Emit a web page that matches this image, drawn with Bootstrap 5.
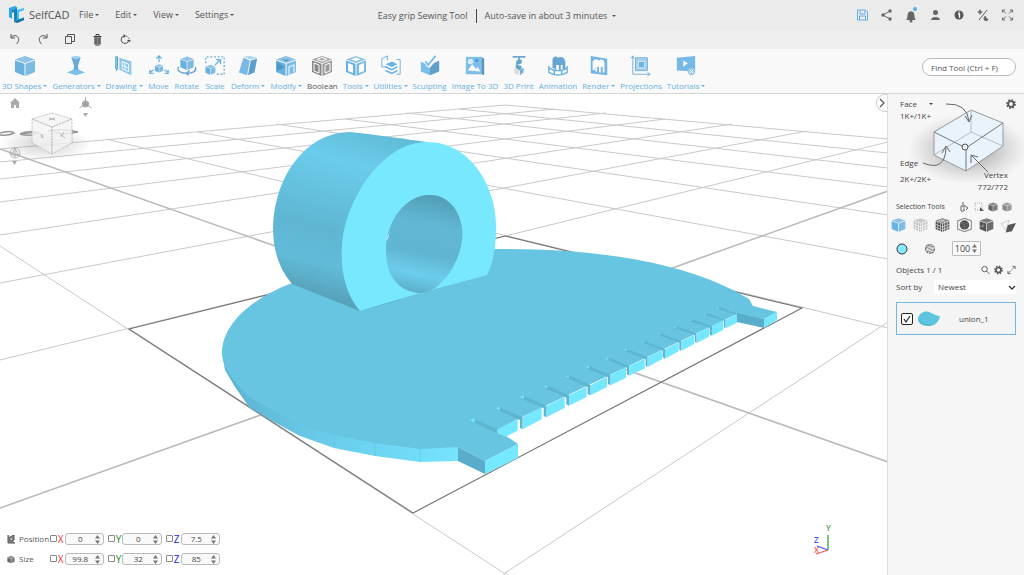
<!DOCTYPE html>
<html lang="en">
<head>
<meta charset="utf-8">
<meta name="viewport" content="width=device-width, initial-scale=1">
<title>SelfCAD - Easy grip Sewing Tool</title>
<link rel="stylesheet" href="https://cdn.jsdelivr.net/npm/bootstrap@5.3.0/dist/css/bootstrap.min.css">
<style>
body{font-family:"Open Sans","Noto Sans",sans-serif;font-size:9px;line-height:12px;color:#555;background:#fff;overflow:hidden}
button{font:inherit;color:inherit;background:none;border:0;padding:0;line-height:12px;white-space:nowrap}
svg{display:block;flex:none}
.caret::after{content:"";display:inline-block;border:2px solid transparent;border-top-color:currentColor;border-bottom:0;vertical-align:2px;margin-left:2px}
.menubar{height:30px;background:#ebebeb;padding:0 7px 0 8px}
.brand{width:63px;font-size:11px;color:#555;text-decoration:none;white-space:nowrap}
.menus{gap:16px}
.doc-title{padding-right:94px;padding-top:2px}
.doc-sep{width:1px;height:14px;background:#444}
.actions{gap:5px}
.quickbar{height:19px;background:#efefef;gap:14px}
.ribbon{height:45px;background:#f9f9f9;border-bottom:1px solid #d4d4d4;color:#68b0de;font-size:8px}
.tools{gap:5px;padding:4px 0 0 2px}
.tool{display:flex;flex-direction:column;align-items:center;gap:3px}
.tool.active{color:#555}
.find{width:94px;height:18px;font-size:8px;border:1px solid #bbb;border-radius:9px;background:#fff;color:#555;padding:0 8px}
.find::placeholder{color:#555;opacity:1}
.scene{inset:0;width:100%;height:100%}
.collapse-btn{right:0;top:0;width:11px;height:18px;border:1px solid #ccc;border-right:0;border-radius:10px 0 0 10px;background:#fff}
.coords{left:7px;bottom:10px;gap:8px}
.coords label{font-size:10px}
.coords .coord-name label{font-size:8px}
.coord-name{width:43px;gap:4px;white-space:nowrap}
.axis{width:58px;gap:1px}
.tick{appearance:none;width:7px;height:7px;border:1px solid #888;border-radius:1px;margin:0 0 2px;background:#fff}
.spin{width:41px;height:12px;border:1px solid #bbb;border-radius:3px;background:#f9f9f9;padding:0 3px 0 0}
.spin input{width:100%;min-width:0;border:0;background:none;padding:0;text-align:center;font-size:8px;line-height:10px;color:#444}
.side{width:137px;background:#f6f6f6;border-left:1px solid #ddd;color:#444;font-size:8px}
.picker{height:103px}
.picker .diagram{left:0;top:0;width:136px}
.select-types{font-size:7px}
.mini-icons{gap:4px;padding-right:12px}
.shape-row{gap:7px;margin-left:-5px}
.opacity-box{width:29px;height:15px;border-radius:1px}
.opacity-box input{font-size:9px}
.sort-select{appearance:none;width:82px;height:14px;border:0;background:#fff;font-size:8px;color:#444;padding:0 4px}
.object-item{height:33px;border:1px solid #74b7e3;background:#f4f4f4}
.object-tick{appearance:none;width:12px;height:12px;margin:0;border:1px solid #222;border-radius:2px;background:#fff url("data:image/svg+xml,%3Csvg xmlns='http://www.w3.org/2000/svg' viewBox='0 0 10 10'%3E%3Cpath d='M2 5l2 3 4-6' fill='none' stroke='%23222' stroke-width='1.2'/%3E%3C/svg%3E")}
</style>
<script src="https://cdn.jsdelivr.net/npm/bootstrap@5.3.0/dist/js/bootstrap.bundle.min.js"></script>
</head>
<body class="vh-100 d-flex flex-column">
<svg width="0" height="0" class="position-absolute">
<defs>
<symbol id="cube" viewBox="0 0 22 22"><path d="M11 1L21 4.500 11 8 1 4.500z" fill="currentColor" opacity=".75"/><path d="M1 5.500l9.500 3.300V21L1 17z" fill="currentColor"/><path d="M21 5.500l-9.500 3.300V21L21 17z" fill="currentColor" opacity=".85"/></symbol>
<symbol id="spinner" viewBox="0 0 5 9"><path d="M0 3.500L2.500 0 5 3.500zM0 5.500L2.500 9 5 5.500z" fill="#777"/></symbol>
<symbol id="gear" viewBox="0 0 10 10"><circle cx="5" cy="5" r="2.800" fill="none" stroke="#555" stroke-width="1.800"/><circle cx="5" cy="5" r="4" fill="none" stroke="#555" stroke-width="1.800" stroke-dasharray="1.600 1.540"/></symbol>
<symbol id="expand" viewBox="0 0 10 10"><path d="M6 1h3v3M9 1L5.500 4.500M4 9H1V6M1 9l3.500-3.500" fill="none" stroke="#666"/></symbol>
</defs>
</svg>

<header>
<nav class="menubar d-flex align-items-center" aria-label="Main">
<a href="#" class="brand d-flex align-items-center gap-1 me-2">
<svg width="17" height="18" viewBox="0 0 17 18"><path d="M1 2l6-2 3 2-6 2v9l-3-2z" fill="#2aa7e0"/><path d="M4 4l5-2v12l-3 2V6l-2 1z" fill="#1683c4"/><path d="M9 4l7-2v2l-5 2v7l5-2v3l-7 3z" fill="#43c1ee"/><path d="M6 16l3-2 7-2v2l-7 3z" fill="#176d9d"/></svg><span>SelfCAD</span></a>
<div class="menus d-flex">
<button class="caret">File</button><button class="caret">Edit</button><button class="caret">View</button><button class="caret">Settings</button>
</div>
<div class="doc-title d-flex align-items-center mx-auto gap-2"><span>Easy grip Sewing Tool</span><span class="doc-sep"></span><button class="caret">Auto-save in about 3 minutes&nbsp;</button></div>
<div class="actions d-flex align-items-center">
<button aria-label="Save" class="px-1"><svg width="11" height="12" viewBox="0 0 11 12"><path d="M.5 1h8l2 2v8H.5zM3 1v4h5V1M2.500 11V7h6v4" fill="none" stroke="#66aee0"/></svg></button>
<button aria-label="Share" class="px-1"><svg width="11" height="12" viewBox="0 0 11 12"><path d="M9 2L2 6l7 4" fill="none" stroke="#666"/><g fill="#666"><circle cx="9" cy="2" r="1.700"/><circle cx="2" cy="6" r="1.700"/><circle cx="9" cy="10" r="1.700"/></g></svg></button>
<button aria-label="Notifications" class="px-1"><svg width="12" height="18" viewBox="0 0 12 18"><path d="M1 14c2-1 1-7 3-8 1-1 3-1 4 0 2 1 1 7 3 8z" fill="#666"/><circle cx="6" cy="15" r="1.500" fill="#666"/><circle cx="10" cy="3" r="2" fill="#5aaee9"/></svg></button>
<button aria-label="Account" class="px-1"><svg width="11" height="12" viewBox="0 0 11 12" fill="#666"><circle cx="5.500" cy="3.500" r="2.500"/><path d="M1 11c0-4 9-4 9 0z"/></svg></button>
<button aria-label="Info" class="px-1"><svg width="10" height="12" viewBox="0 0 10 12"><circle cx="5" cy="6" r="4.500" fill="#555"/><path d="M4 5h1.500v4M5 2.500v1.300" stroke="#fff" stroke-width="1.300" fill="none"/></svg></button>
<button aria-label="Theme" class="px-1"><svg width="12" height="12" viewBox="0 0 12 12"><path d="M10 1L2 11" stroke="#666"/><circle cx="3" cy="3" r="1.700" fill="#666"/><path d="M3 0v6M0 3h6" stroke="#666" stroke-width=".5"/><path d="M9 7a2.500 2.500 0 1 0 2.500 3A2.500 2.500 0 0 1 9 7z" fill="#666"/></svg></button>
<button aria-label="Full screen" class="px-1"><svg width="11" height="12" viewBox="0 0 11 12"><path d="M.5 3.500V1H3M8 1h2.500v2.500M.5 8.500V11H3M8 11h2.500V8.500M1 1.500l3 3M10 1.500l-3 3M1 10.500l3-3M10 10.500l-3-3" fill="none" stroke="#666"/></svg></button>
</div>
</nav>
<div class="quickbar d-flex align-items-start px-2">
<button aria-label="Undo" class="pt-1"><svg width="14" height="12" viewBox="0 0 14 12"><path d="M3 0v4h4M3 3.500c5-5 11 1 5.500 6.500" fill="none" stroke="#555"/></svg></button>
<button aria-label="Redo" class="pt-1"><svg width="14" height="12" viewBox="0 0 14 12"><path d="M11 0v4H7M11 3.500C6-1.500 0 4.500 5.500 10" fill="none" stroke="#555"/></svg></button>
<button aria-label="Copy" class="pt-1"><svg width="13" height="12" viewBox="0 0 13 12"><path d="M1.500 2.500h6v7h-6zM3.500 2V.5h7v7H8" fill="none" stroke="#555"/></svg></button>
<button aria-label="Delete" class="pt-1"><svg width="13" height="13" viewBox="0 0 13 13"><path d="M3 3h7v7l-2 2H5l-2-2z" fill="#888"/><path d="M2.500 2.500h8M5 2V.5h3V2M5 4v6M8 4v6" fill="none" stroke="#444"/></svg></button>
<button aria-label="Reset" class="pt-1"><svg width="14" height="12" viewBox="0 0 14 12"><path d="M10 8a4 4 0 0 1-7-2 4 4 0 0 1 4-4" fill="none" stroke="#555"/><path d="M8 2a4 4 0 0 1 3 5" fill="none" stroke="#555" stroke-dasharray="1.500"/><path d="M5.500 0v4L8 2zM9 6h4l-2 2.500z" fill="#555"/></svg></button>
</div>
<div class="ribbon d-flex align-items-center justify-content-between">
<div class="tools d-flex">
<button class="tool"><svg width="22" height="22"><use href="#cube"/></svg><span class="caret">3D Shapes</span></button>
<button class="tool"><svg width="22" height="22" viewBox="0 0 22 24"><ellipse cx="11" cy="3" rx="5" ry="2" fill="#9cd0ef"/><path d="M6 3q5 3 10 0l-3 9 1 5H8l1-5z" fill="#67aad8"/><path d="M1 19l7-3h6l7 3-10 3z" fill="#7fc0e8"/></svg><span class="caret">Generators</span></button>
<button class="tool"><svg width="22" height="22" viewBox="0 0 22 24"><path d="M6 3l13 4v15L6 16z" fill="#8cc6ea"/><path d="M9 7l7 3v8l-7-3zM9 11l6 3M12 8v8" fill="none" stroke="#fff"/><path d="M4 2v12l-1 3-1-3V2z" fill="#9dcdeb" stroke="#4797ca"/></svg><span class="caret">Drawing</span></button>
<button class="tool"><svg width="22" height="22" viewBox="0 0 22 24"><svg x="6" y="9" width="10" height="11"><use href="#cube"/></svg><path d="M11 8V2M8 4l3-3 3 3M5 16l-4 3M1 16v4h4M17 16l4 3M21 16v4h-4" fill="none" stroke="currentColor" stroke-width="1.300"/></svg><span>Move</span></button>
<button class="tool"><svg width="22" height="22" viewBox="0 0 22 24"><svg x="3" y="0" width="16" height="18"><use href="#cube"/></svg><path d="M2 13c-3 4 2 7 9 7s11-3 9-7M14 17l-4 3 3 2" fill="none" stroke="#559fd0" stroke-width="1.300"/></svg><span>Rotate</span></button>
<button class="tool"><svg width="22" height="22" viewBox="0 0 22 24"><svg x="0" y="9" width="12" height="14"><use href="#cube"/></svg><path d="M1 9V2h20v19h-8" fill="none" stroke="currentColor" stroke-width="1.500" stroke-dasharray="2"/><path d="M11 11l5-5M12 5h5v5" fill="none" stroke="currentColor" stroke-width="1.500"/></svg><span>Scale</span></button>
<button class="tool"><svg width="22" height="22" viewBox="0 0 22 24"><path d="M6 2l7-1 8 2-7 2z" fill="#a9d5f0"/><path d="M6 3l7 3-3 16-9-3z" fill="#78bae5"/><path d="M21 4l-7 2-3 16 7-3z" fill="#5e9fca"/></svg><span class="caret">Deform</span></button>
<button class="tool"><svg width="22" height="22" viewBox="0 0 22 22"><use href="#cube"/><path d="M2 7l8 5-8 4z" fill="#4f97c7"/><path d="M14 20v-8l5-2v7" fill="none" stroke="#e3f2fb" stroke-width="1.200"/><path d="M7 4.500h8l-4 2z" fill="#4f97c7"/></svg><span class="caret">Modify</span></button>
<button class="tool active"><svg width="22" height="22" viewBox="0 0 22 22" color="#888"><use href="#cube"/><path d="M3 8l5 2v8l-5-2zM14 10l5-2v8l-5 2zM6 4.500l5-2 5 2-5 1.500z" fill="none" stroke="#fff"/></svg><span>Boolean</span></button>
<button class="tool"><svg width="22" height="22" viewBox="0 0 22 22"><use href="#cube"/><path d="M3 8l5 2v8l-5-2zM14 10l5-2v8l-5 2zM6 4.500l5-2 5 2-5 1.500z" fill="#fff"/></svg><span class="caret">Tools</span></button>
<button class="tool"><svg width="22" height="22" viewBox="0 0 22 24"><path d="M7 13H1V4l6-3v5M17 5h4v16h-4" fill="none" stroke="currentColor"/><path d="M5 10l7-3 6 3-6 3z" fill="#6ab3df"/><path d="M5 12l7 3 6-3v2l-6 3-7-3zM5 16l7 3 6-3v2l-6 3-7-3z" fill="#6ab3df"/></svg><span class="caret">Utilities</span></button>
<button class="tool"><svg width="22" height="22" viewBox="0 0 22 24"><path d="M1 7l6 3 4 4v8L1 18z" fill="#7dbee8"/><path d="M21 6l-6 3-4 5v8l10-4z" fill="#609fca"/><path d="M6 7l3 4 8-10" fill="none" stroke="#f9f9f9" stroke-width="4"/><path d="M6 7l3 4 8-10" fill="none" stroke="#7dbee8" stroke-width="2"/></svg><span>Sculpting</span></button>
<button class="tool"><svg width="22" height="22" viewBox="0 0 22 24"><path d="M1 2h17v19H1z" fill="#7dbee8"/><path d="M18 2l3 2v18l-3-1z" fill="#5797c4"/><path d="M3 17l5-7 4 5 2-2 3 5" fill="#f9f9f9"/><circle cx="6" cy="7" r="3" fill="#d6ecf9"/><circle cx="13" cy="6" r="2" fill="#539ecf"/></svg><span>Image To 3D</span></button>
<button class="tool"><svg width="22" height="22" viewBox="0 0 22 24"><path d="M4 2h14M11 2v5" stroke="#6eaad0" stroke-width="2"/><path d="M8 6l6-1v4l-5 2 5 1-1 4-3 1-3-4 1-2z" fill="#65a1c9"/><path d="M6 14l5 2v6l-5-2z" fill="#ddd"/><path d="M12 16l4-2v5l-4 3z" fill="#75b1d9"/></svg><span>3D Print</span></button>
<button class="tool"><svg width="22" height="22" viewBox="0 0 22 24"><path d="M5 14V4q3-4 6-1 6-3 8 4v9h-3v-5h-2v5h-2v-5H9v5z" fill="#65a6d2"/><path d="M1 12v7c6 4 14 4 20 0v-7M1 14c6 4 14 4 20 0M7 16v5M15 16v5" fill="none" stroke="currentColor" stroke-width="1.500"/></svg><span>Animation</span></button>
<button class="tool"><svg width="22" height="22" viewBox="0 0 22 24"><path d="M2 1l18 3v18L2 20z" fill="#71b6e3"/><path d="M4 16V7q3-4 7-1 5-3 6 3v10h-2v-6h-2v6h-2v-6H9v5H7v-5l-1 4z" fill="#f9f9f9"/></svg><span class="caret">Render</span></button>
<button class="tool"><svg width="22" height="22" viewBox="0 0 22 24"><path d="M2 1v20h19M0 4l2-3 2 3M18 19l3 2-3 2" fill="none" stroke="#72add5"/><path d="M5 3h13v14H5z" fill="#a6d1ed" stroke="#6eb0dc"/><path d="M8 7h7v7H8z" fill="#70b4df" stroke="#d5eaf7"/></svg><span>Projections</span></button>
<button class="tool"><svg width="22" height="22" viewBox="0 0 22 24"><path d="M1 3l20-2v17L1 17z" fill="#74b9e7"/><path d="M8 6l5 3-5 4z" fill="#fff"/><circle cx="17" cy="18" r="4" fill="#9bc8e5"/><path d="M15 16l4 4M19 16l-4 4" stroke="#fff"/></svg><span class="caret">Tutorials</span></button>
</div>
<input class="find me-2 mb-2" type="text" placeholder="Find Tool (Ctrl + F)" aria-label="Find Tool">
</div>
</header>

<div class="flex-grow-1 d-flex" style="min-height:0">
<main class="flex-grow-1 position-relative overflow-hidden">
<svg class="scene position-absolute" viewBox="0 94 887 481" preserveAspectRatio="xMidYMid slice" aria-label="3D viewport">
<defs>
<linearGradient id="barrel" gradientUnits="userSpaceOnUse" x1="370" y1="132" x2="322" y2="300"><stop offset="0" stop-color="#61bdd9"/><stop offset=".2" stop-color="#6bcceb"/><stop offset=".38" stop-color="#65c3e0"/><stop offset=".6" stop-color="#5fb6d3"/><stop offset=".8" stop-color="#61bbd8"/><stop offset="1" stop-color="#569fb8"/></linearGradient>
<linearGradient id="bore" gradientUnits="userSpaceOnUse" x1="432" y1="195" x2="412" y2="291"><stop offset="0" stop-color="#529eb6"/><stop offset=".3" stop-color="#61b8d4"/><stop offset=".6" stop-color="#60b5d2"/><stop offset=".82" stop-color="#6ccdec"/><stop offset="1" stop-color="#5cb0cb"/></linearGradient>
<linearGradient id="rim" x1="0" x2="1"><stop offset="0" stop-color="#5cb1cd"/><stop offset=".4" stop-color="#68cae8"/><stop offset="1" stop-color="#75e4ff"/></linearGradient>
<radialGradient id="shade"><stop offset="0" stop-color="#888" stop-opacity=".4"/><stop offset="1" stop-color="#888" stop-opacity="0"/></radialGradient>
</defs>
<g fill="none" stroke="#c9c9c9" stroke-width="1">
<path d="M0 149L505 105M0 162L555 109M0 179L606 113M0 202L665 119M0 235L732 124M0 283L807 131M0 360L888 142M505 573L888 322"/>
<path d="M0 246L507 575M503 575L507 572M106 139L888 328M198 132L888 259M276 124L888 215M345 119L888 187M407 113L888 168M459 109L888 153M505 105L888 139"/>
<path d="M0 149L888 462M0 508L888 191" stroke="#b9b9b9" stroke-width="1.600"/>
<path d="M129 329L505 236 802 308 413 513z" stroke="#777" stroke-width="1.200"/>
</g>
<path fill="url(#rim)" d="M222 352L225 370 235 387 249 407 272 421 300 436 334 448 375 456 420 462 458 461V445L380 430z"/>
<path fill="#67c5e1" d="M292 283C250 299 222 325 222 353C222 366 232 381 249 397L272 410 300 424 334 435 375 443 420 449 458 447 485 461 518 444 497 430 518 419 737 314 764 319 777 312 753 306 749 299C690 263 600 248 495 249z"/>
<path fill="#59adca" d="M458 447L485 461V474L458 461zM737 313L764 319V328L737 322z"/>
<path fill="#75e7ff" d="M485 461L518 444V458L485 474zM764 319L777 312V320L764 328z"/>
<path d="M249 397v10M272 410v11M334 435v12M375 443v13M420 449v13" stroke="#62bedb" stroke-width=".5"/>
<g transform="translate(420 290) scale(.3333)">
<path fill="#5eb5d1" d="M163 387L232 418V430L152 394zM238 351L308 382V418L300 414V390L293 388 228 358zM311 317L380 348V382L371 378V354L365 352 301 324zM382 286L447 316V347L439 343V323L434 320 372 293zM447 255L512 286V316L503 312V292L500 290 438 262zM508 228L572 255V286L564 282V262L561 260 500 235zM566 202L628 228V257L621 253V234L618 232 558 208zM622 177L683 202V231L677 227V208L674 206 614 183zM675 153L735 178V206L728 202V182L726 180 667 158zM724 130L784 154V182L778 179V159L776 157 716 136zM771 109L830 131V159L825 156V136L823 134 763 114zM817 88L876 109V137L869 134V114L867 112 809 94zM860 69L917 90V115L912 112V93L910 91 853 74zM899 51L952 72V96L949 74 891 56z"/>
<path fill="#75e7ff" d="M232 418L293 388V422L258 440 232 430zM308 382L365 352V388L308 418zM380 348L434 320V353L380 382zM447 316L500 290V321L447 347zM512 286L561 260V291L512 316zM572 255L618 232V263L572 286zM628 228L674 206V235L628 257zM683 202L726 180V208L683 231zM735 178L776 157V184L735 206zM784 154L823 134V162L784 182zM830 131L867 112V140L830 159zM876 109L910 91V119L876 137zM917 90L951 72V98L917 115z"/>
<path fill="#75e4fa" d="M149 391l15-7v14zM226 355l13-6v13zM299 321l13-5v11zM371 290l11-5v10zM436 260l11-5v9zM498 232l9-4v8zM556 206l9-4v8zM612 180l8-4v7zM665 156l7-3v6zM714 134l7-3v5zM761 112l7-3v5zM807 91l6-2v4zM851 72l6-2v4zM890 54l6-2v4z"/>
</g>
<path fill="url(#barrel)" d="M360 311L292 284Q273 262 273 228C274 176 306 133 349 132Q356 132 427 142L460 200 400 300z"/>
<path fill="#78e8ff" d="M360 311C346 295 340 270 342 246C345 200 382 142 427 142C472 142 499 190 496 234Q495 260 487 275L420 293z"/>
<path fill="url(#bore)" d="M429 195C451 194 465 217 462 240C459 266 439 293 420 293C399 292 386 276 386 252C385 224 404 195 429 195z"/>
<path d="M386 241q4-9 4-14-1 12-4 14z" fill="#fff"/>
<g stroke-width="1.300" fill="none"><path d="M828 550V535" stroke="#43a047"/><path d="M828 550L817 546" stroke="#4b4bff"/><path d="M828 550L816 554" stroke="#f55"/></g>
<g font-size="8" font-weight="600"><text x="826" y="531" fill="#43a047">Y</text><text x="814" y="543" fill="#4b4bff">Z</text><text x="814" y="553" fill="#f55">X</text></g>
<ellipse cx="45" cy="144" rx="46" ry="17" fill="url(#shade)"/>
<g fill="none" stroke="#999" stroke-width="1.500"><path d="M0 133q12-3 14 0-5 3-14 2M20 134q8-4 18-1-8 4-18 1l16-2M48 131q15-3 30 1l-14 2-10-2"/></g>
<g fill="#f4f4f4" fill-opacity=".8" stroke="#aaa" stroke-width=".7" stroke-dasharray="2 1"><path d="M32 119L52 113 72 119 52 127z"/><path d="M32 119L52 127V154L32 143z"/><path d="M72 119L52 127V154L72 143z"/></g>
<path d="M40 134l4 4M43 134l-2 4M60 134l5 4M64 132l-3 5M49 118l6 2M55 118l-6 2" stroke="#aaa" stroke-width=".8"/>
<g fill="#aaa"><path d="M10 103l5-5 5 5h-1v5h-3v-3h-2v3h-3v-5z"/><path d="M83 113h5l-2.500 4zM12 161h5l-2.500 4z"/><circle cx="85.500" cy="104" r="3.500"/></g>
<path d="M85.500 97v7l-6 4M85.500 104l6 4M82 103l3.500 2 3.500-2" fill="none" stroke="#999" stroke-width=".8"/>
<g fill="none" stroke="#aaa" stroke-width=".8"><circle cx="15" cy="153" r="5"/><path d="M15 148v10M10 154l5 2 5-2M15 148l-3 7M15 148l3 7"/></g>
</svg>
<button class="collapse-btn position-absolute" aria-label="Hide panel"><svg width="9" height="10" viewBox="0 0 9 10"><path d="M3 1l4 4-4 4" fill="none" stroke="#555" stroke-width="1.200"/></svg></button>
<form class="coords position-absolute d-flex flex-column">
<div class="d-flex align-items-center">
<div class="coord-name d-flex align-items-center"><svg width="8" height="9" viewBox="0 0 8 9"><path d="M1 0v8h7M3 2l4-2v5l-4 1z" fill="#888" stroke="#555"/></svg><label for="px">Position</label></div>
<div class="axis d-flex align-items-center"><input class="tick" type="checkbox" aria-label="Lock X position"><label for="px" style="color:#e33">X</label><div class="spin d-flex align-items-center ms-auto me-1"><input id="px" value="0"><svg width="5" height="9"><use href="#spinner"/></svg></div></div>
<div class="axis d-flex align-items-center"><input class="tick" type="checkbox" aria-label="Lock Y position"><label for="py" style="color:#282">Y</label><div class="spin d-flex align-items-center ms-auto me-1"><input id="py" value="0"><svg width="5" height="9"><use href="#spinner"/></svg></div></div>
<div class="axis d-flex align-items-center"><input class="tick" type="checkbox" aria-label="Lock Z position"><label for="pz" style="color:#22e">Z</label><div class="spin d-flex align-items-center ms-auto me-1"><input id="pz" value="7.5"><svg width="5" height="9"><use href="#spinner"/></svg></div></div>
</div>
<div class="d-flex align-items-center">
<div class="coord-name d-flex align-items-center"><svg width="8" height="9" viewBox="0 0 22 22" color="#666"><use href="#cube"/></svg><label for="sx">Size</label></div>
<div class="axis d-flex align-items-center"><input class="tick" type="checkbox" aria-label="Lock X size"><label for="sx" style="color:#e33">X</label><div class="spin d-flex align-items-center ms-auto me-1"><input id="sx" value="99.8"><svg width="5" height="9"><use href="#spinner"/></svg></div></div>
<div class="axis d-flex align-items-center"><input class="tick" type="checkbox" aria-label="Lock Y size"><label for="sy" style="color:#282">Y</label><div class="spin d-flex align-items-center ms-auto me-1"><input id="sy" value="32"><svg width="5" height="9"><use href="#spinner"/></svg></div></div>
<div class="axis d-flex align-items-center"><input class="tick" type="checkbox" aria-label="Lock Z size"><label for="sz" style="color:#22e">Z</label><div class="spin d-flex align-items-center ms-auto me-1"><input id="sz" value="85"><svg width="5" height="9"><use href="#spinner"/></svg></div></div>
</div>
</form>
</main>

<aside class="side flex-shrink-0">
<section class="picker position-relative">
<svg class="diagram position-absolute" height="104" viewBox="888 94 136 104"><defs><radialGradient id="floor"><stop offset="0" stop-color="#777" stop-opacity=".9"/><stop offset=".5" stop-color="#999" stop-opacity=".45"/><stop offset="1" stop-color="#aaa" stop-opacity="0"/></radialGradient></defs>
<ellipse cx="968" cy="149" rx="60" ry="35" fill="url(#floor)"/>
<path d="M934 132L971 110 1003 123V146L966 171 934 155z" fill="#e8f3fc" stroke="#999"/>
<path d="M971 110V132L934 155M971 132l32 14" fill="none" stroke="#bbb"/><path d="M934 132L966 148 1003 123M966 148v23" fill="none" stroke="#777"/><circle cx="965" cy="147" r="3" fill="#f3f7fa" stroke="#555"/>
<path d="M946 104Q967 103 969 121M965 116l4 6 3-7M923 163Q945 172 946 148M942 153l4-7 4 6M988 172L972 156M971 163v-8l7 2" fill="none" stroke="#666"/></svg>
<div class="position-relative d-flex flex-column h-100 px-2 py-1">
<div class="ms-1 d-flex justify-content-between"><button class="caret">Face &nbsp; &nbsp;&nbsp;</button><button aria-label="Selection settings"><svg width="10" height="10"><use href="#gear"/></svg></button></div>
<div class="ms-1">1K+/1K+</div>
<div class="ms-1 mt-auto">Edge</div>
<div class="ms-1 d-flex justify-content-between"><span class="mt-1">2K+/2K+</span><span class="text-end me-2">Vertex<br>772/772</span></div>
</div>
</section>
<section class="ps-2">
<div class="select-types d-flex align-items-center pt-1"><span>Selection Tools</span>
<div class="mini-icons d-flex ms-auto">
<svg width="10" height="10" viewBox="0 0 10 10"><path d="M1 9V4h3v5zM4 3l4 3-2 2M3 0v3" fill="none" stroke="#666"/></svg><svg width="10" height="10" viewBox="0 0 10 10"><path d="M1 1h7v7H1z" fill="none" stroke="#aaa" stroke-dasharray="1"/><path d="M6 5l4 4H6z" fill="#555"/></svg><svg width="10" height="10" color="#666"><use href="#cube"/></svg><svg width="10" height="10" color="#888"><use href="#cube"/></svg></div></div>
<div class="shape-row d-flex pt-1">
<button aria-label="Object"><svg width="15" height="16" color="#68b2e4"><use href="#cube"/></svg></button>
<button aria-label="Wireframe"><svg width="15" height="16" viewBox="0 0 22 22" color="#bbb"><use href="#cube"/><path d="M1 10l10 4 10-4M1 14l10 4 10-4M4 6v13M8 7v14M14 7v14M18 6v13" fill="none" stroke="#fff"/></svg></button>
<button aria-label="Solid grid"><svg width="15" height="16" viewBox="0 0 22 22" color="#444"><use href="#cube"/><path d="M1 10l10 4 10-4M1 14l10 4 10-4M4 6v13M8 7v14M14 7v14M18 6v13M5 4l10 3M8 3l10 3M14 3L5 6" fill="none" stroke="#ddd"/></svg></button>
<button aria-label="Vertices"><svg width="15" height="16" viewBox="0 0 22 22" color="#999"><path d="M11 1l10 4v12l-10 4-10-4V5z" fill="none" stroke="#888" stroke-width="1.500"/><circle cx="11" cy="11" r="7" fill="#555"/><path d="M5 8l6 2 6-2M11 10v7" fill="none" stroke="#777"/></svg></button>
<button aria-label="Edges"><svg width="15" height="16" viewBox="0 0 22 22" color="#555"><use href="#cube"/><path d="M11 8v13M1 12l5 2v-4" fill="none" stroke="#bbb"/></svg></button>
<button aria-label="Faces"><svg width="15" height="16" viewBox="0 0 22 22"><path d="M0 9l12-5-5 15z" fill="none" stroke="#bbb"/><path d="M10 11l12-3-6 12-9 2z" fill="#555"/></svg></button>
</div>
<div class="d-flex align-items-center pt-2">
<svg width="12" height="12" viewBox="0 0 12 12"><circle cx="6" cy="6" r="5" fill="#84eaff" stroke="#333"/></svg>
<svg class="ms-3" width="12" height="12" viewBox="0 0 12 12"><circle cx="6" cy="6" r="4.500" fill="#ddd" stroke="#666" stroke-dasharray="2 1"/><path d="M1 6q2.500-3 5 0t5 0M2 3q2-2 4 0t4 0M2 9q2-2 4 0t4 0" fill="none" stroke="#666" stroke-width=".8"/></svg>
<div class="spin opacity-box d-flex align-items-center ms-3"><input value="100" aria-label="Opacity"><svg width="5" height="9"><use href="#spinner"/></svg></div></div>
<div class="d-flex align-items-center pt-1 mt-1"><span>Objects 1 / 1</span><div class="d-flex ms-auto gap-1 me-2"><svg width="9" height="10" viewBox="0 0 10 10"><circle cx="4" cy="4" r="3" fill="none" stroke="#555"/><path d="M6 6l3.500 3.500" stroke="#555"/></svg><svg width="9" height="10"><use href="#gear"/></svg><svg width="9" height="10"><use href="#expand"/></svg></div></div>
<div class="d-flex align-items-center pt-1"><label for="sort">Sort by</label><div class="position-relative ms-auto me-2"><select id="sort" class="sort-select"><option>Newest</option></select><svg class="position-absolute end-0 top-0 pe-none mt-1" width="8" height="7" viewBox="0 0 8 7"><path d="M1 2l3 3 3-3" fill="none" stroke="#333" stroke-width="1.300"/></svg></div></div>
<div class="object-item d-flex align-items-center mt-2 me-2 px-1"><input class="object-tick" type="checkbox" id="obj" checked><svg class="ms-1" width="26" height="18" viewBox="0 0 26 18"><path d="M1 8C3 2 9 0 14 3c4 1 5 3 9 3-1 6-5 10-11 10C4 16 1 13 1 8z" fill="#5dc4df"/><path d="M2 10c3 4 7 6 12 5" fill="none" stroke="#4cabc7"/></svg><label for="obj" class="ms-3">union_1</label></div>
</section>
</aside>
</div>
</body>
</html>
